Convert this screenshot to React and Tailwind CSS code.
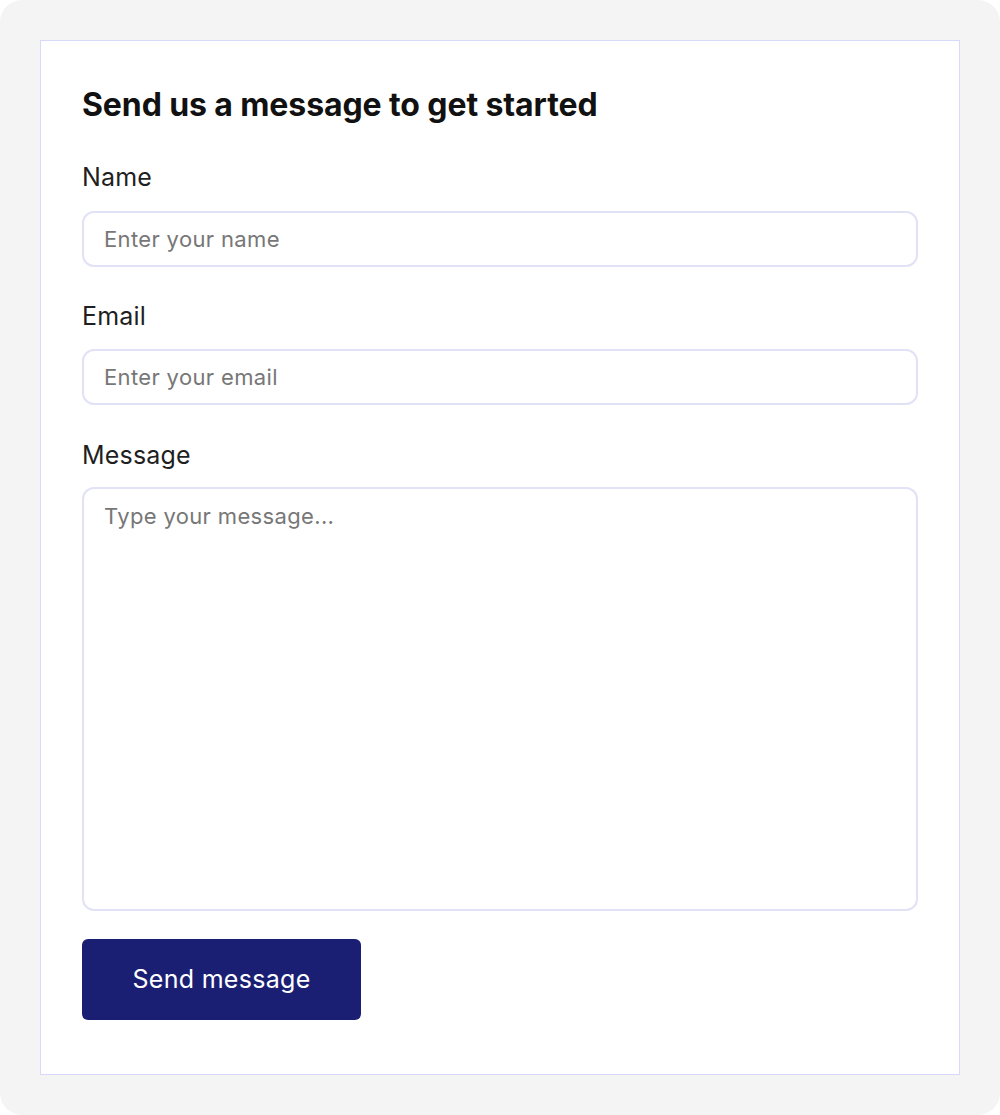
export default function App() {
  const inputCls =
    "h-[56px] w-full rounded-[12px] border-2 border-[#e2e2f6] px-[20px] text-[22px] tracking-[0.35px] text-[#222] placeholder:text-[#777] outline-none";
  const labelCls = "text-[25px] leading-[32px] text-[#1f1f1f] tracking-[0.2px]";
  return (
    <div className="w-[1000px] h-[1115px] bg-white" style={{ fontFamily: 'Inter, "Noto Sans", sans-serif' }}>
      <div className="w-full h-full rounded-[22px] bg-[#f4f4f4] p-10">
        <div className="h-full bg-white border border-[#d8d8fa] px-[41px] pt-[44px]">
          <h1 className="text-[32px] leading-[40px] font-bold text-[#111] tracking-[-0.1px]">Send us a message to get started</h1>
          <form className="mt-[36px] flex flex-col" onSubmit={(e) => e.preventDefault()}>
            <label className={labelCls + " mb-[18px]"}>Name</label>
            <input type="text" placeholder="Enter your name" className={inputCls} />
            <label className={labelCls + " mt-[33px] mb-[17px]"}>Email</label>
            <input type="email" placeholder="Enter your email" className={inputCls} />
            <label className={labelCls + " mt-[34px] mb-[16px]"}>Message</label>
            <textarea
              placeholder="Type your message..."
              className="h-[424px] w-full resize-none rounded-[12px] border-2 border-[#e2e2f6] px-[20px] py-[11px] text-[22px] tracking-[0.35px] text-[#222] placeholder:text-[#777] outline-none"
            />
            <button
              type="submit"
              className="mt-[28px] h-[81px] w-[279px] rounded-[6px] bg-[#1b1f73] text-white text-[25px] tracking-[0.3px]"
            >
              Send message
            </button>
          </form>
        </div>
      </div>
    </div>
  );
}
